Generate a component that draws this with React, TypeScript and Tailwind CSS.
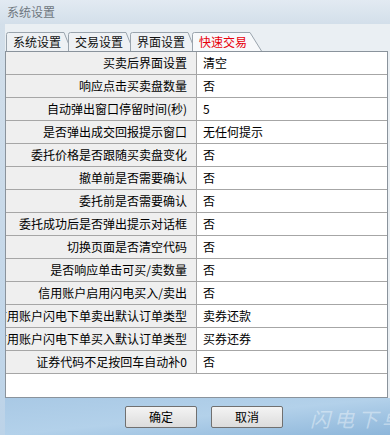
const rows: [string, string][] = [
  ['买卖后界面设置', '清空'],
  ['响应点击买卖盘数量', '否'],
  ['自动弹出窗口停留时间(秒)', '5'],
  ['是否弹出成交回报提示窗口', '无任何提示'],
  ['委托价格是否跟随买卖盘变化', '否'],
  ['撤单前是否需要确认', '否'],
  ['委托前是否需要确认', '否'],
  ['委托成功后是否弹出提示对话框', '否'],
  ['切换页面是否清空代码', '否'],
  ['是否响应单击可买/卖数量', '否'],
  ['信用账户启用闪电买入/卖出', '否'],
  ['信用账户闪电下单卖出默认订单类型', '卖券还款'],
  ['信用账户闪电下单买入默认订单类型', '买券还券'],
  ['证券代码不足按回车自动补0', '否'],
];

const tabs = ['系统设置', '交易设置', '界面设置', '快速交易'];

const font = { fontFamily: '"Noto Sans CJK SC", "Liberation Sans", sans-serif' };

function Tab({ label, active }: { label: string; active?: boolean }) {
  return (
    <div className={`relative h-[19px] ${active ? 'w-[70px]' : 'w-[66px]'} -mr-[4px] shrink-0`}>
      <svg className="absolute inset-0" width="100%" height="19" viewBox={active ? '0 0 70 19' : '0 0 66 19'} preserveAspectRatio="none">
        <path
          d={active ? 'M0.5 19 V2.5 Q0.5 0.5 2.5 0.5 H58 L69.5 19' : 'M0.5 19 V2.5 Q0.5 0.5 2.5 0.5 H58 L65.5 19'}
          fill={active ? '#f7f9fb' : '#eef1f4'}
          stroke="#9aa4ad"
        />
      </svg>
      <span
        className={`relative block pl-[7px] pt-[1px] text-[12px] leading-[17px] ${active ? 'text-[#e8000b]' : 'text-[#111]'}`}
      >
        {label}
      </span>
    </div>
  );
}

export default function App() {
  return (
    <div className="w-[390px] h-[435px] overflow-hidden flex flex-col bg-[#b7d0e6]" style={font}>
      <div className="h-[24px] shrink-0 flex items-center pl-[7px] bg-gradient-to-b from-[#e2eaf2] to-[#d3dfea] text-[12px] text-[#6f7780]">
        系统设置
      </div>
      <div className="flex-1 flex flex-col pl-[5px] bg-gradient-to-b from-[#d3dfea] to-[#bcd3e8]">
        <div className="bg-[#eaeff3] h-[374px] flex flex-col">
          <div className="flex items-end pt-[8px] h-[27px] pl-[1px]">
            {tabs.map((t, i) => (
              <Tab key={t} label={t} active={i === 3} />
            ))}
          </div>
          <div className="flex-1 flex flex-col border border-[#8a939c] bg-white mr-[2px]">
            {rows.map(([k, v]) => (
              <div key={k} className="flex h-[23px] border-b border-[#a6a6a6]">
                <div className="w-[191px] shrink-0 flex justify-end items-center overflow-hidden whitespace-nowrap bg-[#efefef] border-r border-[#a6a6a6] pr-[9px] text-[12px] text-black">
                  {k}
                </div>
                <div className="flex-1 flex items-center pl-[6px] text-[12px] text-black whitespace-nowrap">{v}</div>
              </div>
            ))}
          </div>
        </div>
        <div className="flex-1 relative flex items-start pt-[8px] pl-[120px] gap-[14px] bg-gradient-to-br from-[#a9c9e5] via-[#b3d1ea] to-[#8db6da]">
          <button className="w-[72px] h-[22px] border border-[#707070] rounded-[2px] bg-gradient-to-b from-[#f4f4f4] to-[#dcdcdc] text-[12px] text-black leading-none">
            确定
          </button>
          <button className="w-[72px] h-[22px] border border-[#707070] rounded-[2px] bg-gradient-to-b from-[#f4f4f4] to-[#dcdcdc] text-[12px] text-black leading-none">
            取消
          </button>
          <span className="absolute right-[-16px] top-[6px] text-[20px] tracking-[4px] text-white/40 italic">闪电下单</span>
        </div>
      </div>
    </div>
  );
}
